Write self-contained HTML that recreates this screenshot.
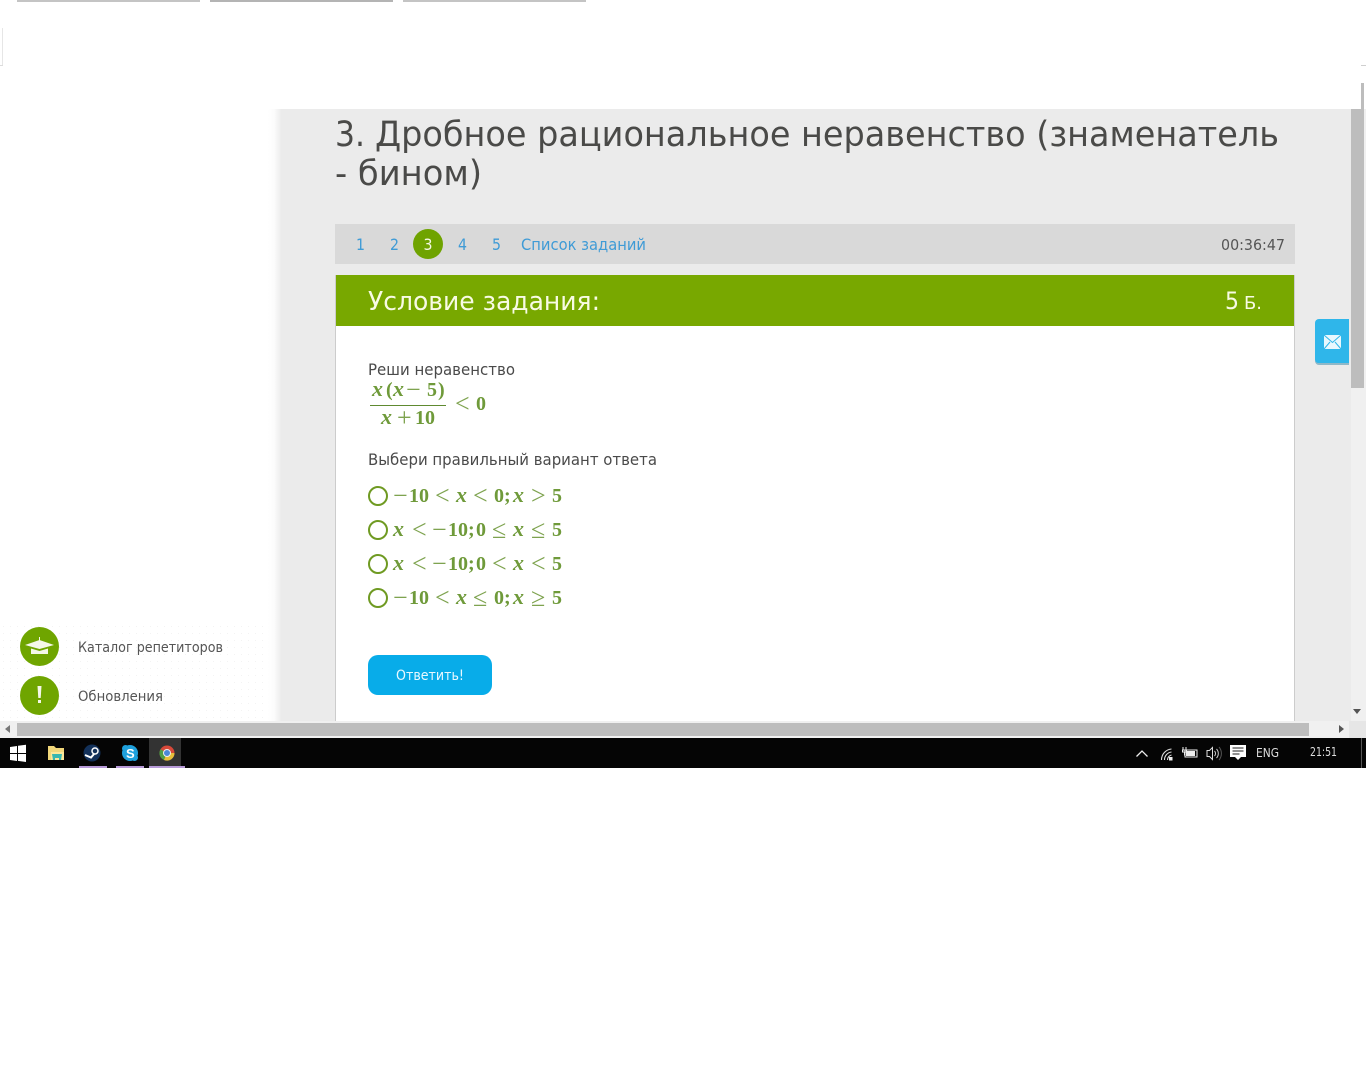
<!DOCTYPE html>
<html lang="ru"><head><meta charset="utf-8"><title>Дробное рациональное неравенство</title>
<style>
html,body{margin:0;padding:0;background:#fff;width:1366px;height:1080px;overflow:hidden}
svg{display:block}
.s{font-family:"DejaVu Sans","Liberation Sans",sans-serif}
.m{font-family:"Liberation Serif",serif;font-size:20px;font-weight:700;fill:#6f9a3a}
.r{font-family:"Liberation Serif",serif;font-size:26px;font-weight:400;fill:#7ea34f}
.i{font-style:italic;font-size:22px}
</style></head><body>
<svg width="1366" height="1080" viewBox="0 0 1366 1080" xmlns="http://www.w3.org/2000/svg">
<defs>
<linearGradient id="sh" x1="0" x2="1" y1="0" y2="0"><stop offset="0" stop-color="#fff"/><stop offset=".5" stop-color="#fbfbfb"/><stop offset="1" stop-color="#ececec"/></linearGradient>
<pattern id="dots" width="7" height="7" patternUnits="userSpaceOnUse"><rect x="3" y="3" width="1" height="1" fill="#f3f3f3"/></pattern>
</defs>
<rect width="1366" height="1080" fill="#fff"/>
<!-- top fragments -->
<rect x="17" y="0" width="183" height="2" fill="#c4c4c4"/>
<rect x="210" y="0" width="183" height="2" fill="#b4b4b4"/>
<rect x="403" y="0" width="183" height="2" fill="#c4c4c4"/>
<rect x="2" y="28" width="1" height="37" fill="#e6e6e6"/>
<rect x="0" y="65" width="3" height="1" fill="#dcdcdc"/>
<rect x="1361" y="65" width="5" height="1" fill="#cfcfcf"/>
<!-- sidebar -->
<rect x="0" y="625" width="270" height="96" fill="url(#dots)"/>
<rect x="268" y="109" width="13" height="612" fill="url(#sh)"/>
<!-- main -->
<rect x="281" y="109" width="1070" height="612" fill="#ebebeb"/>
<rect x="1361" y="83" width="3" height="26" fill="#bdbdbd"/>
<rect x="1351" y="109" width="15" height="612" fill="#f0f0f0"/>
<rect x="1351" y="109" width="13" height="279" fill="#bdbdbd"/>
<path d="M1353 709h8l-4 5z" fill="#555"/>
<text class="s" x="335" y="146" font-size="35" fill="#4a4a48" textLength="30" lengthAdjust="spacingAndGlyphs">3.</text>
<text class="s" x="375" y="146" font-size="35" fill="#4a4a48" textLength="904" lengthAdjust="spacingAndGlyphs">Дробное рациональное неравенство (знаменатель</text>
<text class="s" x="335" y="185" font-size="35" fill="#4a4a48" textLength="147" lengthAdjust="spacingAndGlyphs">- бином)</text>
<!-- nav -->
<rect x="335" y="224" width="960" height="40" fill="#d9d9d9"/>
<g class="s" font-size="16" fill="#3f9bd6">
<text x="356" y="250" textLength="9" lengthAdjust="spacingAndGlyphs">1</text>
<text x="390" y="250" textLength="9" lengthAdjust="spacingAndGlyphs">2</text>
<text x="458" y="250" textLength="9" lengthAdjust="spacingAndGlyphs">4</text>
<text x="492" y="250" textLength="9" lengthAdjust="spacingAndGlyphs">5</text>
<text x="521" y="250" textLength="125" lengthAdjust="spacingAndGlyphs">Список заданий</text>
</g>
<circle cx="428" cy="244" r="15" fill="#6fa300"/>
<text class="s" x="423.500" y="250" font-size="16" fill="#f4f8e4" textLength="9" lengthAdjust="spacingAndGlyphs">3</text>
<text class="s" x="1221" y="250" font-size="15" fill="#555" textLength="64" lengthAdjust="spacingAndGlyphs">00:36:47</text>
<!-- card -->
<rect x="335" y="275" width="960" height="446" fill="#ccc"/>
<rect x="336" y="275" width="958" height="446" fill="#fff"/>
<rect x="336" y="275" width="958" height="51" fill="#78a800"/>
<text class="s" x="368" y="310" font-size="26" fill="#f8fbe4" textLength="232" lengthAdjust="spacingAndGlyphs">Условие задания:</text>
<text class="s" x="1225" y="309" font-size="24" fill="#f8fbe4" textLength="14" lengthAdjust="spacingAndGlyphs">5</text>
<text class="s" x="1244" y="309" font-size="18" fill="#f8fbe4" textLength="18" lengthAdjust="spacingAndGlyphs">Б.</text>
<text class="s" x="368" y="375" font-size="16" fill="#4a4a4a" textLength="147" lengthAdjust="spacingAndGlyphs">Реши неравенство</text>
<!-- fraction -->
<text class="m"><tspan class="i" x="372" y="396">x</tspan><tspan x="386" y="396">(</tspan><tspan class="i" x="393" y="396">x</tspan><tspan x="427" y="396">5</tspan><tspan x="438" y="396">)</tspan></text>
<text class="r" x="406" y="398">−</text>
<rect x="370" y="405" width="76" height="1" fill="#5f8a30"/>
<text class="m"><tspan class="i" x="381" y="424">x</tspan><tspan x="415" y="424">10</tspan></text>
<text class="r" x="397" y="426">+</text>
<text class="r" x="455" y="412">&lt;</text>
<text class="m" x="476" y="410">0</text>
<text class="s" x="368" y="465" font-size="16" fill="#4a4a4a" textLength="289" lengthAdjust="spacingAndGlyphs">Выбери правильный вариант ответа</text>
<!-- options -->
<g fill="none" stroke="#6f9a22" stroke-width="2"><circle cx="378" cy="496" r="9"/><circle cx="378" cy="530" r="9"/><circle cx="378" cy="564" r="9"/><circle cx="378" cy="598" r="9"/></g>
<g>
<text class="r" x="393" y="504">−</text><text class="m" x="409" y="502">10</text><text class="r" x="435" y="504">&lt;</text><text class="m i" x="456" y="502">x</text><text class="r" x="473" y="504">&lt;</text><text class="m" x="494" y="502">0;</text><text class="m i" x="513" y="502">x</text><text class="r" x="531" y="504">&gt;</text><text class="m" x="552" y="502">5</text>
<text class="m i" x="393" y="536">x</text><text class="r" x="412" y="538">&lt;</text><text class="r" x="432" y="538">−</text><text class="m" x="448" y="536">10;</text><text class="m" x="476" y="536">0</text><text class="r" x="492" y="538">≤</text><text class="m i" x="513" y="536">x</text><text class="r" x="531" y="538">≤</text><text class="m" x="552" y="536">5</text>
<text class="m i" x="393" y="570">x</text><text class="r" x="412" y="572">&lt;</text><text class="r" x="432" y="572">−</text><text class="m" x="448" y="570">10;</text><text class="m" x="476" y="570">0</text><text class="r" x="492" y="572">&lt;</text><text class="m i" x="513" y="570">x</text><text class="r" x="531" y="572">&lt;</text><text class="m" x="552" y="570">5</text>
<text class="r" x="393" y="606">−</text><text class="m" x="409" y="604">10</text><text class="r" x="435" y="606">&lt;</text><text class="m i" x="456" y="604">x</text><text class="r" x="473" y="606">≤</text><text class="m" x="494" y="604">0;</text><text class="m i" x="513" y="604">x</text><text class="r" x="531" y="606">≥</text><text class="m" x="552" y="604">5</text>
</g>
<!-- button -->
<rect x="368" y="655" width="124" height="40" rx="10" fill="#08ace9"/>
<text class="s" x="396" y="680" font-size="14" fill="#e8f8ff" textLength="68" lengthAdjust="spacingAndGlyphs">Ответить!</text>
<!-- mail tab -->
<path d="M1349 319h-30a4 4 0 0 0-4 4v37a4 4 0 0 0 4 4h30z" fill="#2fb6ea"/>
<path d="M1349 365h-30a4 4 0 0 1-4-4v-1a4 4 0 0 0 4 3h30z" fill="#8fb8c8"/>
<rect x="1324" y="335" width="17" height="14" fill="#e8f8fe"/>
<path d="M1324 335l8.500 7.500 8.500-7.500M1324 349l6-7M1341 349l-6-7" fill="none" stroke="#2fb6ea" stroke-width="1"/>
<!-- sidebar items -->
<circle cx="39.500" cy="646.500" r="19.500" fill="#6fa500"/>
<path d="M25 645l14.500-5 14.500 5-14.500 4z" fill="#f4f7e8"/>
<path d="M31 648.500l8.500 2.500 8.500-2.500v5.500h-17z" fill="#f4f7e8"/>
<rect x="39" y="637" width="1" height="5" fill="#f4f7e8"/>
<circle cx="39.500" cy="695.500" r="19.500" fill="#6fa500"/>
<path d="M37.500 686h4l-.8 12h-2.400z" fill="#f4f7e8"/><rect x="38" y="700" width="3" height="3" fill="#f4f7e8"/>
<text class="s" x="78" y="652" font-size="14" fill="#555" textLength="145" lengthAdjust="spacingAndGlyphs">Каталог репетиторов</text>
<text class="s" x="78" y="701" font-size="14" fill="#555" textLength="85" lengthAdjust="spacingAndGlyphs">Обновления</text>
<!-- h scrollbar -->
<rect x="0" y="721" width="1351" height="17" fill="#f0f0f0"/>
<rect x="1349" y="721" width="17" height="17" fill="#e6e6e6"/>
<rect x="17" y="723" width="1292" height="13" fill="#bdbdbd"/>
<path d="M10 725v8l-5-4z" fill="#777"/><path d="M1339 725v8l5-4z" fill="#555"/>
<!-- taskbar -->
<rect x="0" y="738" width="1366" height="30" fill="#050505"/>
<rect x="149" y="738" width="32" height="28" fill="#333"/>
<rect x="79" y="766" width="28" height="2" fill="#b79ad8"/>
<rect x="116" y="766" width="28" height="2" fill="#b79ad8"/>
<rect x="149" y="766" width="36" height="2" fill="#b79ad8"/>
<rect x="1361" y="738" width="1" height="30" fill="#555"/>
<path d="M10 747l7-1v7h-7zM18 745.800l8-1.100v8.300h-8zM10 754h7v7l-7-1zM18 754h8v8l-8-1.100z" fill="#fff"/>
<path d="M48 746h6l2 2h8v12H48z" fill="#f1d77a"/><path d="M51 752h13v8H51z" fill="#fbe79a"/><path d="M52 754h10l-1 6h-2v-2h-4v2h-2z" fill="#38b7b0"/>
<circle cx="92" cy="753" r="8.500" fill="#13315a"/><circle cx="95" cy="751" r="3" fill="none" stroke="#fff" stroke-width="1.500"/><path d="M85 755l6 2.500 3-3.500" fill="none" stroke="#fff" stroke-width="2"/>
<circle cx="130" cy="753" r="8" fill="#1ea0dc"/><circle cx="125.500" cy="748.500" r="3.500" fill="#1ea0dc"/><circle cx="134.500" cy="757.500" r="3.500" fill="#1ea0dc"/>
<text x="126" y="758" font-family="Liberation Sans,sans-serif" font-weight="700" font-size="13" fill="#fff">S</text>
<circle cx="167" cy="753" r="7.500" fill="#d8493a"/><path d="M167 753L160.500 749.200A7.500 7.500 0 0 0 164 760z" fill="#4f9d45"/><path d="M167 753h7.500A7.500 7.500 0 0 1 164 760z" fill="#e7bf3a"/><circle cx="167" cy="753" r="3.500" fill="#4a88d8" stroke="#eee" stroke-width="1"/>
<!-- tray -->
<path d="M1136.500 756.500l5.500-5.500 5.500 5.500" fill="none" stroke="#eee" stroke-width="1.300"/>
<g fill="none" stroke="#ddd" stroke-width="1.100"><path d="M1161.500 760a11 11 0 0 1 10-11"/><path d="M1164.500 760a8 8 0 0 1 7-8"/><path d="M1167.500 760a5 5 0 0 1 4-5"/></g><rect x="1169" y="757" width="3.500" height="3.500" fill="#eee"/>
<rect x="1185" y="750" width="12" height="7" fill="none" stroke="#eee" stroke-width="1"/><rect x="1186" y="751" width="9" height="5" fill="#eee"/><path d="M1183 747v3M1186 747v3M1182.500 750h4v2h-4zM1184.500 752v3h1" fill="none" stroke="#eee"/>
<path d="M1207 750.500h2.500l3-3v12l-3-3h-2.500z" fill="none" stroke="#ddd" stroke-width="1"/><path d="M1214.500 751a3.500 3.500 0 0 1 0 5M1216.500 749a6.500 6.500 0 0 1 0 9" fill="none" stroke="#ccc" stroke-width="1"/><path d="M1219 747a10 10 0 0 1 0 13" fill="none" stroke="#555" stroke-width="1"/>
<path d="M1230 745h16v12h-5l-3 3-3-3h-5z" fill="#fff"/><path d="M1232.500 748h11M1232.500 751h11M1232.500 754h7" stroke="#222" stroke-width="1"/>
<text class="s" x="1256" y="757" font-size="12" fill="#ddd" textLength="23" lengthAdjust="spacingAndGlyphs">ENG</text>
<text class="s" x="1310" y="756" font-size="12" fill="#ddd" textLength="27" lengthAdjust="spacingAndGlyphs">21:51</text>
</svg>
</body></html>
